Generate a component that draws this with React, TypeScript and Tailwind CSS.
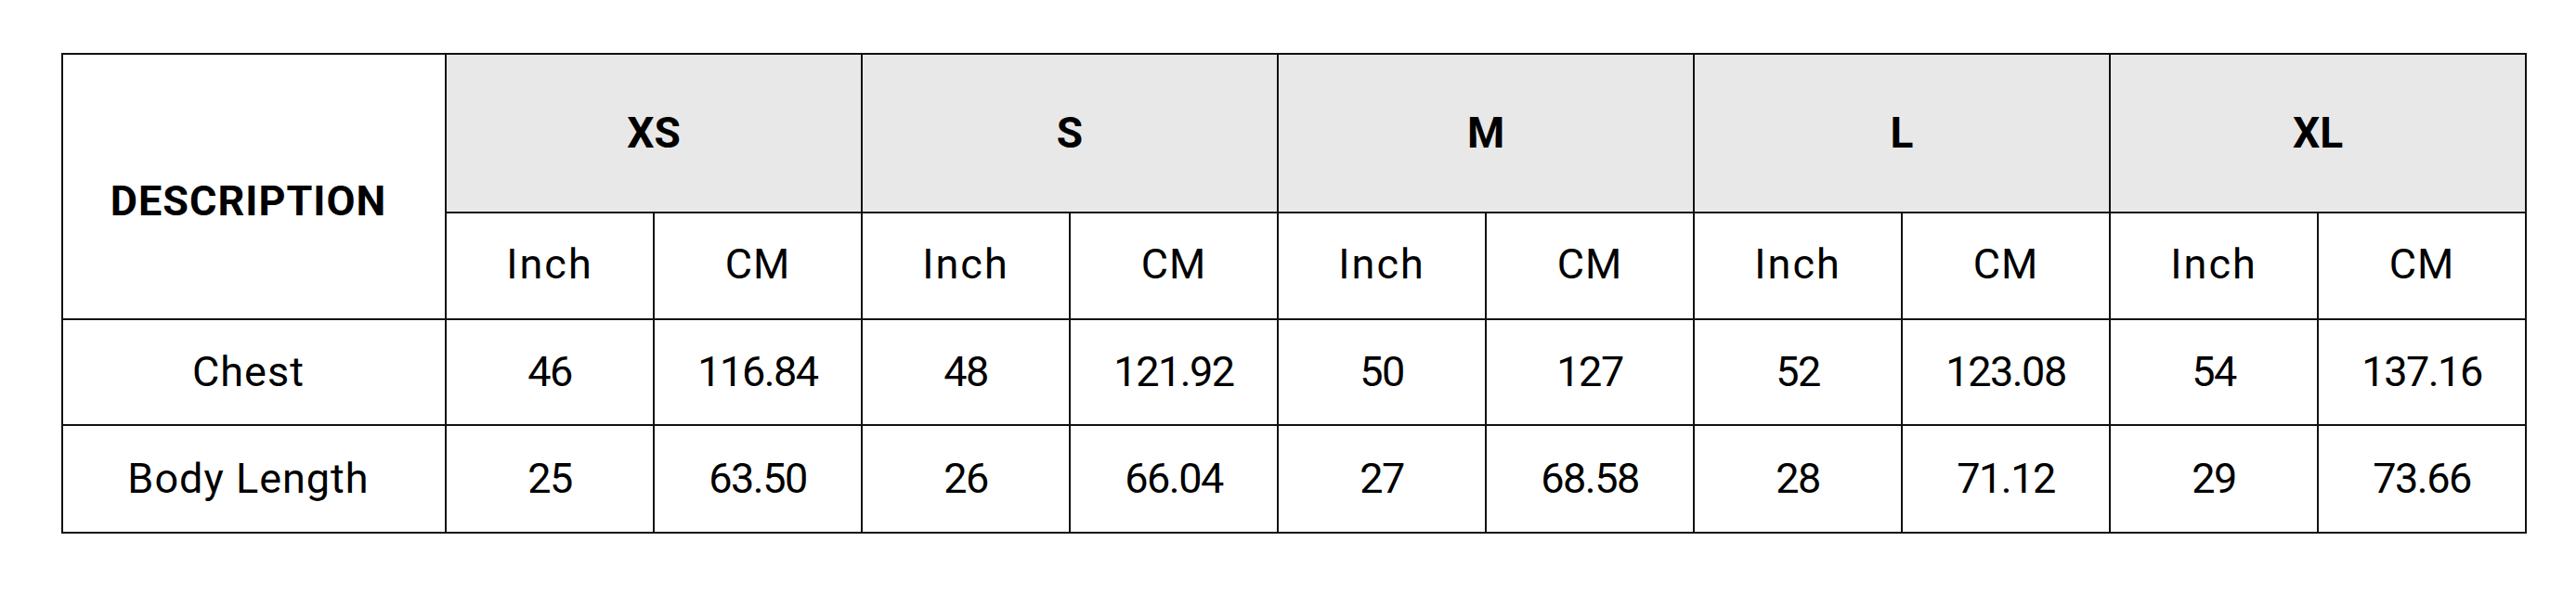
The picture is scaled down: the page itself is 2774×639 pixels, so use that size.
import React from "react"

const sizes = ["XS", "S", "M", "L", "XL"]

const rows = [
  { label: "Chest", values: ["46", "116.84", "48", "121.92", "50", "127", "52", "123.08", "54", "137.16"] },
  { label: "Body Length", values: ["25", "63.50", "26", "66.04", "27", "68.58", "28", "71.12", "29", "73.66"] },
]

export default function App() {
  return (
    <div
      className="w-[2774px] h-[639px] bg-white pt-[57px] pl-[66px] text-black"
      style={{ fontFamily: "Roboto, 'Liberation Sans', sans-serif" }}
    >
      <table className="table-fixed border-collapse w-[2653px] border-2 border-[#111]">
        <colgroup>
          <col className="w-[413px]" />
          {Array.from({ length: 10 }).map((_, i) => (
            <col key={i} className="w-[224px]" />
          ))}
        </colgroup>
        <thead>
          <tr className="h-[171px]">
            <th
              rowSpan={2}
              className="border-2 border-[#111] text-[45px] font-bold tracking-[1px] text-center align-middle pt-[32px] pr-[12px]"
            >
              DESCRIPTION
            </th>
            {sizes.map((s) => (
              <th key={s} colSpan={2} className="border-2 border-[#111] bg-[#e8e8e8] text-[46px] font-bold text-center align-middle">
                {s}
              </th>
            ))}
          </tr>
          <tr className="h-[115px]">
            {sizes.map((s) => (
              <React.Fragment key={s}>
                <th className="border-2 border-[#111] text-[45px] font-normal tracking-[2px] text-center align-middle pb-[4px]">Inch</th>
                <th className="border-2 border-[#111] text-[45px] font-normal tracking-[1px] text-center align-middle pb-[4px]">CM</th>
              </React.Fragment>
            ))}
          </tr>
        </thead>
        <tbody>
          {rows.map((r, ri) => (
            <tr key={r.label} className={ri === 0 ? "h-[114px]" : "h-[116px]"}>
              <td className="border-2 border-[#111] text-[45px] tracking-[1px] text-center align-middle pr-[12px]">{r.label}</td>
              {r.values.map((v, i) => (
                <td key={i} className="border-2 border-[#111] text-[45px] tracking-[-1.5px] text-center align-middle">
                  {v}
                </td>
              ))}
            </tr>
          ))}
        </tbody>
      </table>
    </div>
  )
}
